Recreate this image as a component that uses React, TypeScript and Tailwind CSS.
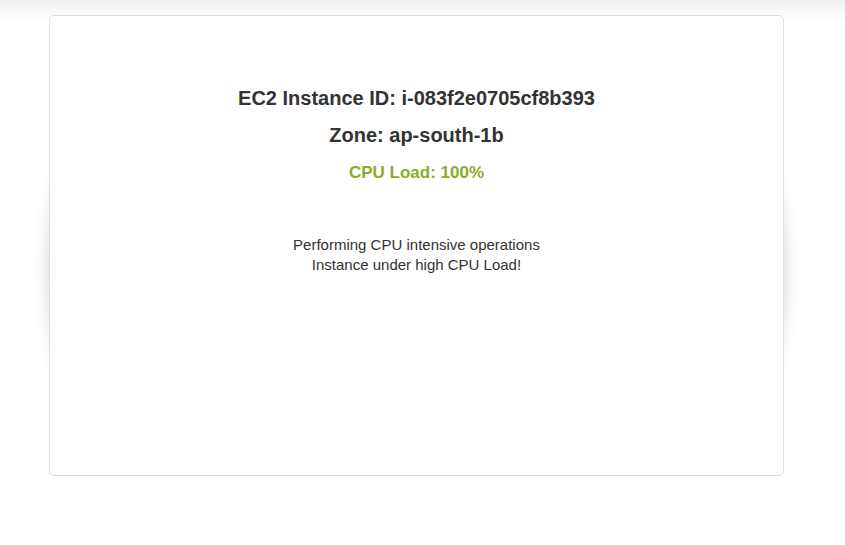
export default function App() {
  return (
    <div className="min-h-[545px] w-full bg-[linear-gradient(#f0f0f0,#ffffff_20px)] px-[49px] pt-[15px] font-['Liberation_Sans',Arial,sans-serif]">
      <div className="relative h-[461px] w-[735px]">
        <div className="absolute inset-x-[6px] top-[130px] bottom-[80px] rounded-[40px/125px] shadow-[0_0_22px_rgba(0,0,0,0.32)]" />
        <div className="relative flex h-full flex-col items-center rounded-[5px] border border-[#dddddd] bg-white pt-[71px] text-center text-[#333333]">
          <h3 className="text-[20px] leading-[22px] font-bold">EC2 Instance ID: i-083f2e0705cf8b393</h3>
          <h3 className="mt-[15px] text-[20px] leading-[22px] font-bold">Zone: ap-south-1b</h3>
          <h4 className="mt-[17px] text-[17px] leading-[19px] font-bold text-[#8aac2b]">CPU Load: 100%</h4>
          <p className="mt-[53px] text-[15px] leading-[20px]">
            Performing CPU intensive operations
            <br />
            Instance under high CPU Load!
          </p>
        </div>
      </div>
    </div>
  );
}
